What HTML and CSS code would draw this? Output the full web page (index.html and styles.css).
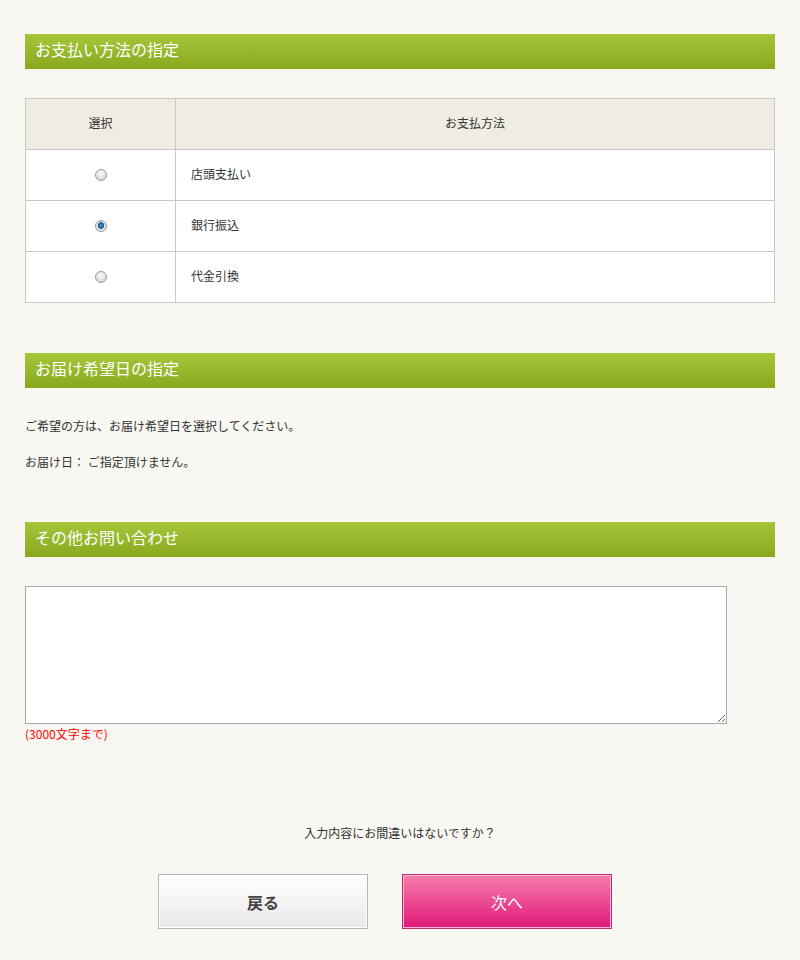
FILE: index.html
```html
<!DOCTYPE html>
<html lang="ja">
<head>
    <meta charset="UTF-8">
    <meta name="viewport" content="width=device-width, initial-scale=1.0">
    <title>お支払い方法・お届け日の指定</title>
    <link rel="stylesheet" href="styles.css">
</head>
<body>
    <div class="wrap">
        <section class="block">
            <h2 class="ttl">お支払い方法の指定</h2>
            <table class="pay-table">
                <tr>
                    <th class="col-select">選択</th>
                    <th>お支払方法</th>
                </tr>
                <tr>
                    <td class="col-select"><input type="radio" name="payment" id="pay1"></td>
                    <td><label for="pay1">店頭支払い</label></td>
                </tr>
                <tr>
                    <td class="col-select"><input type="radio" name="payment" id="pay2" checked></td>
                    <td><label for="pay2">銀行振込</label></td>
                </tr>
                <tr>
                    <td class="col-select"><input type="radio" name="payment" id="pay3"></td>
                    <td><label for="pay3">代金引換</label></td>
                </tr>
            </table>
        </section>

        <section class="block">
            <h2 class="ttl">お届け希望日の指定</h2>
            <p class="txt">ご希望の方は、お届け希望日を選択してください。</p>
            <p class="txt">お届け日： ご指定頂けません。</p>
        </section>

        <section class="block">
            <h2 class="ttl">その他お問い合わせ</h2>
            <textarea class="message" name="message"></textarea>
            <p class="attention">(3000文字まで)</p>
        </section>

        <p class="confirm">入力内容にお間違いはないですか？</p>
        <div class="btn-area">
            <button type="button" class="btn btn-back">戻る</button>
            <button type="button" class="btn btn-next">次へ</button>
        </div>
    </div>
</body>
</html>
```

FILE: styles.css
```css
body {
    margin: 0;
    font-family: 'Noto Sans CJK JP', 'Noto Sans', sans-serif;
    font-size: 12px;
    color: #333;
    background-color: #f8f7f2;
}
.wrap {
    width: 750px;
    padding: 34px 25px 32px;
}
.block {
    margin-bottom: 50px;
}
.ttl {
    margin: 0 0 29px;
    height: 35px;
    line-height: 31px;
    padding: 0 10px;
    font-size: 16px;
    font-weight: normal;
    color: #fff;
    background: linear-gradient(to bottom, #a6c63a, #88a91e);
}
.pay-table {
    width: 100%;
    border-collapse: collapse;
    background-color: #fff;
}
.pay-table th, .pay-table td {
    height: 47px;
    padding: 0 15px 3px;
    border: 1px solid #c8c8c8;
    font-weight: normal;
    text-align: left;
}
.pay-table th {
    background-color: #f0ece1;
    text-align: center;
}
.pay-table .col-select {
    width: 119px;
    text-align: center;
}
input[type="radio"] {
    appearance: none;
    -webkit-appearance: none;
    width: 12px;
    height: 12px;
    margin: 0 0 1px;
    border: 1px solid #9a9a9a;
    border-radius: 50%;
    background: radial-gradient(circle at 50% 35%, #fbfbfb, #cfcfcf);
    vertical-align: middle;
}
input[type="radio"]:checked {
    background: radial-gradient(circle at 50% 45%, #4a9ad6 0, #135c94 3px, #e8e8e8 3.6px, #d0d0d0 100%);
}
.txt {
    margin: 0 0 17px;
    line-height: 19px;
}
.txt + .txt {
    margin-bottom: 0;
}
.block:nth-child(2) .ttl {
    margin-bottom: 28px;
}
.block:nth-child(2) {
    margin-bottom: 51px;
}
.message {
    display: block;
    width: 702px;
    height: 138px;
    margin: 0;
    padding: 2px;
    box-sizing: border-box;
    border: 1px solid #aaa;
    background-color: #fff;
    resize: vertical;
}
.attention {
    margin: 1px 0 0;
    color: #f00;
    line-height: 18px;
}
.confirm {
    margin: 81px 0 0;
    text-align: center;
    line-height: 18px;
}
.btn-area {
    display: flex;
    justify-content: center;
    gap: 34px;
    margin-top: 32px;
    padding-right: 30px;
}
.btn {
    width: 210px;
    height: 55px;
    font-family: inherit;
    font-size: 16px;
    font-weight: bold;
    cursor: pointer;
}
.btn-back {
    color: #444;
    border: 1px solid #b5b5b5;
    box-shadow: inset 0 0 0 1px #fff;
    background: linear-gradient(to bottom, #ffffff, #e8e8e8);
}
.btn-next {
    color: #fff;
    font-weight: normal;
    border: 1px solid #c02c6c;
    box-shadow: inset 0 0 0 1px #fbb7d3;
    background: linear-gradient(to bottom, #f77dab, #e0197a);
}
```
